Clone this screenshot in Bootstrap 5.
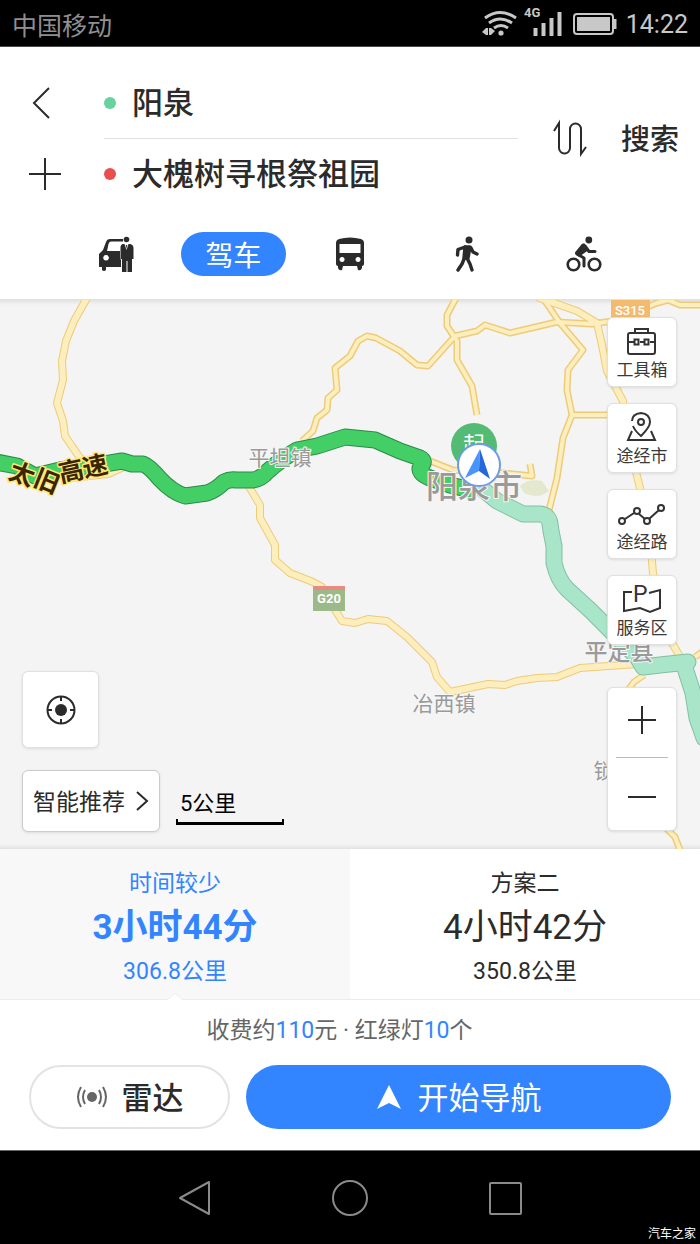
<!DOCTYPE html>
<html lang="zh-CN">
<head>
<meta charset="utf-8">
<meta name="viewport" content="width=device-width, initial-scale=1">
<title>路线规划</title>
<link href="https://cdn.jsdelivr.net/npm/bootstrap@5.3.0/dist/css/bootstrap.min.css" rel="stylesheet">
<style>
  :root { --ink: #2b2b2b; --brand: #3385ff; --hair: #e0e0e0; }
  body { font-family: Roboto, "Noto Sans CJK SC", sans-serif; color: var(--ink); background: #fff; }
  svg { display: block; flex: none; }
  button { font-family: inherit; color: inherit; }
  .icon-btn { background: none; border: 0; padding: 0; }
  .label-line { padding-top: 4px; }
  .statusbar { background: #000; height: 47px; border-bottom: 1px solid #4a4a4a; font-size: 25px; line-height: 46px; color: #c8c8c8; }
  .carrier { color: #8f8f8f; }
  .planner { padding-top: 20px; padding-bottom: 23px; }
  .side-col { width: 104px; padding-left: 28px; }
  .field-row { height: 71px; }
  .field-row + .field-row { border-top: 1px solid var(--hair); }
  .side-col .field-row { border-color: transparent; }
  .field-row input { border: 0; outline: 0; padding: 2px 0 0; background: none; font-size: 31px; font-weight: 500; line-height: 44px; color: var(--ink); }
  .dot { width: 12px; height: 12px; flex: none; }
  .dot-from { background: #65d39b; }
  .dot-to { background: #e94f4f; }
  .swap-col { width: 103px; }
  .search-btn { width: 79px; padding-top: 6px; font-size: 29px; font-weight: 500; text-align: left; }
  .modes { padding: 0 58px; margin-top: 23px; height: 44px; }
  .mode-pill { background: var(--brand); color: #fff; width: 105px; height: 44px; font-size: 28px; line-height: 44px; padding-top: 3px; }
  .map-area { min-height: 549px; background: #f4f4f4; box-shadow: inset 0 6px 5px -5px #0000001f, inset 0 -6px 5px -5px #0000001f; border-top: 1px solid #e2e2e2; }
  .map-canvas { inset: 0; width: 100%; height: 100%; }
  .tile { background: #fff; border: 1px solid #e0e0e0; border-radius: 6px; box-shadow: 0 1px 3px #0000001a; padding: 0; }
  .tools { top: 17px; right: 23px; width: 70px; }
  .tool { height: 70px; margin-bottom: 16px; font-size: 17px; line-height: 26px; color: #3a3a3a; padding-top: 5px; }
  .zoom-box { margin-top: 42px; height: 144px; }
  .zoom-box .zoom-in { height: 69px; }
  .zoom-box hr { margin: 0 8px; border-color: #bbb; opacity: 1; }
  .map-foot { left: 22px; bottom: 17px; }
  .locate { width: 77px; height: 77px; margin-bottom: 22px; }
  .prefer { width: 138px; height: 62px; font-size: 23px; border-color: #ccc; gap: 10px; }
  .scale-box { width: 108px; margin-left: 16px; margin-top: 15px; }
  .scale-box span { font-size: 22px; line-height: 30px; padding: 4px 0 0 4px; color: #000; }
  .scale-bar { height: 6px; border: 2px solid #000; border-top: 0; border-bottom-width: 3px; }
  .plan { height: 151px; background: #fff; font-size: 23px; line-height: 32px; padding: 8px 0 0; border: 0; border-bottom: 1px solid #ececec; }
  .plan .total { font-size: 35px; line-height: 56px; }
  .plan.chosen { background: #f8f8f8; color: var(--brand); }
  .plan.chosen .total { font-weight: 700; }
  .notch { left: 50%; bottom: -1px; margin-left: -8px; }
  .toll { font-size: 23px; line-height: 32px; padding: 15px 21px 0 0; color: #666; }
  .toll b { font-weight: 400; color: var(--brand); }
  .actions { padding: 18px 29px 21px; gap: 16px; }
  .actions button { height: 64px; font-size: 31px; border-radius: 32px; }
  .radar { width: 201px; border: 2px solid #e3e3e3; background: #fff; gap: 14px; font-weight: 500; }
  .go { background: var(--brand); color: #fff; border: 0; gap: 16px; }
  .sysbar { background: #000; height: 94px; border-top: 1px solid #666; }
  .sysbar .icon-btn { width: 155px; }
  .watermark { right: 4px; bottom: 0; font-size: 12px; line-height: 20px; color: #fff; }
</style>
</head>
<body>
<div class="d-flex flex-column min-vh-100">

  <div class="statusbar d-flex justify-content-between">
    <span class="carrier label-line ps-2 ms-1">中国移动</span>
    <div class="d-flex align-items-center pe-2 me-1">
      <svg class="me-1" width="142" height="46" viewBox="480 0 142 46" fill="none" stroke="#c8c8c8">
        <g stroke-width="3">
          <path d="M485 18Q500 7 516 18M489 23Q500 15 512 23M494 28Q501 23 508 28"/>
        </g>
        <circle cx="501" cy="33" r="2.6" fill="#c8c8c8" stroke="none"/>
        <path d="M482 32l4-4v7zM486 28h2v7h-2zM489 28h2v7h-2zM491 35v-7l4 3z" fill="#c8c8c8" stroke="none"/>
        <text x="524" y="17" font-size="13" font-weight="700" fill="#c8c8c8" stroke="none">4G</text>
        <path d="M535.500 28v8M543.500 23v13M551.500 18v18M559.500 12v24" stroke-width="4"/>
        <rect x="574" y="14" width="39" height="20" rx="3" stroke-width="2"/>
        <rect x="577" y="17" width="33" height="14" fill="#c8c8c8" stroke="none"/>
        <path d="M615 19v10" stroke-width="3"/>
      </svg>
      <span class="label-line">14:22</span>
    </div>
  </div>

  <form class="planner" onsubmit="return false">
    <div class="d-flex">
      <div class="side-col flex-shrink-0">
        <div class="field-row d-flex align-items-center">
          <button type="button" class="icon-btn" aria-label="返回">
            <svg width="32" height="34" viewBox="0 0 32 34" fill="none" stroke="#2b2b2b" stroke-width="2"><path d="M21 2 6 17 21 32"/></svg>
          </button>
        </div>
        <div class="field-row d-flex align-items-center">
          <button type="button" class="icon-btn" aria-label="添加途经点">
            <svg width="34" height="34" viewBox="0 0 34 34" stroke="#2b2b2b" stroke-width="2"><path d="M1 17H33M17 1V33"/></svg>
          </button>
        </div>
      </div>
      <div class="flex-grow-1">
        <div class="field-row d-flex align-items-center">
          <span class="dot dot-from rounded-circle me-3"></span>
          <input class="w-100" type="text" value="阳泉" aria-label="起点">
        </div>
        <div class="field-row d-flex align-items-center">
          <span class="dot dot-to rounded-circle me-3"></span>
          <input class="w-100" type="text" value="大槐树寻根祭祖园" aria-label="终点">
        </div>
      </div>
      <button type="button" class="icon-btn swap-col flex-shrink-0 d-flex align-items-center justify-content-center" aria-label="交换起终点">
        <svg width="36" height="38" viewBox="0 0 36 38" fill="none" stroke="#2b2b2b" stroke-width="2"><path d="M2 12 7 4V29a5.500 5.500 0 0 0 11 0V10a5.500 5.500 0 0 1 11 0V35L34 28"/></svg>
      </button>
      <button type="submit" class="icon-btn search-btn flex-shrink-0">搜索</button>
    </div>

    <div class="modes d-flex align-items-center">
      <div class="col d-flex justify-content-center">
        <button type="button" class="icon-btn" aria-label="打车">
          <svg width="36" height="36" viewBox="0 0 36 36" fill="#2b2b2b">
            <path fill-rule="evenodd" d="M1 18 5 14 8 6Q9 3 12 3H25V5.500H13Q11 5.500 10.500 8L9 15H22V22L23 24V31H8V34Q6 36 4 34V31H1ZM8 19a2.800 2.800 0 1 0 .1 0z"/>
            <circle cx="28.500" cy="3.500" r="2.800"/>
            <path fill-rule="evenodd" d="M24.500 8H32.500Q35.500 9 35.500 12V23H34V36H29.500V25H28.500V36H24V23H22.500V11Q22.500 9 24.500 8ZM26.500 8 28.500 14 30.500 8Z"/>
            <path d="M27.800 9H29.200L28.600 13Z"/>
          </svg>
        </button>
      </div>
      <div class="col d-flex justify-content-center">
        <button type="button" class="icon-btn mode-pill rounded-pill flex-shrink-0" aria-pressed="true">驾车</button>
      </div>
      <div class="col d-flex justify-content-center">
        <button type="button" class="icon-btn" aria-label="公交">
          <svg width="36" height="36" viewBox="0 0 36 36" fill="#2b2b2b">
            <path fill-rule="evenodd" d="M4 7Q4 4 7 3Q18 0 29 3Q32 4 32 7V28Q32 30 30 30V32Q29 35 26 34L25 30H11L10 34Q7 35 6 32V30Q4 30 4 28ZM7.500 8V17H28.500V8ZM10 21a2.500 2.500 0 1 0 .1 0ZM26 21a2.500 2.500 0 1 0 .1 0Z"/>
          </svg>
        </button>
      </div>
      <div class="col d-flex justify-content-center">
        <button type="button" class="icon-btn" aria-label="步行">
          <svg width="36" height="36" viewBox="0 0 36 36" fill="none" stroke="#2b2b2b" stroke-width="3.400" stroke-linecap="round" stroke-linejoin="round">
            <circle cx="20" cy="4" r="3.500" fill="#2b2b2b" stroke="none"/>
            <path d="M16 11 9 13.500 8.500 19M22 12 24 16 28 18M15 23 13 28 9 34M18 22 21 28 23 34"/>
            <path d="M16 11H21L19 22H15Z" fill="#2b2b2b"/>
          </svg>
        </button>
      </div>
      <div class="col d-flex justify-content-center">
        <button type="button" class="icon-btn" aria-label="骑行">
          <svg width="36" height="36" viewBox="0 0 36 36" fill="none" stroke="#2b2b2b" stroke-width="3" stroke-linecap="round" stroke-linejoin="round">
            <circle cx="22.800" cy="4" r="3.400" fill="#2b2b2b" stroke="none"/>
            <circle cx="7.500" cy="28.500" r="5.800" stroke-width="2.600"/>
            <circle cx="28.500" cy="28.500" r="5.800" stroke-width="2.600"/>
            <path d="M18 9 11 18 18 22V30M19 10 23 15.500H29"/>
            <path d="M17 9 10.500 17 13 19 20 14Z" fill="#2b2b2b"/>
          </svg>
        </button>
      </div>
    </div>
  </form>

  <main class="map-area position-relative flex-grow-1 overflow-hidden">
    <svg class="map-canvas position-absolute" viewBox="0 300 700 549" preserveAspectRatio="xMidYMid slice" fill="none" stroke-linejoin="round" role="img" aria-label="地图">
      <defs>
        <g id="roads">
          <path stroke-width="var(--w2)" d="M87 298 74 321 66 341 62 361 63 380 57 403 63 421 65 436 80 458M70 478 108 474 130 464"/>
          <path stroke-width="var(--w1)" d="M302 441 313 431 317 418 327 410 328 398 337 390 335 368 350 356 358 341 367 336 376 338 400 351 417 365 428 366 455 336 477 331 485 325 510 333 557 322 592 324 613 321 657 303 668 300 680 305 700 305"/>
          <path stroke-width="var(--w1)" d="M456 298 447 315 447 326 457 341 457 360 472 386 477 415M572 415H610M695 657 702 652M628 690 634 682 644 675M666 828 675 837 680 850"/>
          <path stroke-width="var(--w1)" d="M543 298 560 323 583 350 568 370 567 390 572 415 563 438 557 478 549 510M425 459 453 470 503 473 532 476 530 464"/>
          <path stroke-width="var(--w2)" d="M537 297 577 311 597 323 602 345 607 371 623 401 628 440 640 488 650 540 653 573 660 615 672 643 682 660"/>
          <path stroke-width="var(--w2)" d="M248 485 260 505 260 518 275 545 275 560 290 573 313 582 322 587 337 613 342 621 355 623 368 619 387 621 407 637 432 662 437 677 450 692 488 684 505 685 517 681 537 678 557 677 580 668 637 664"/>
        </g>
        <path id="ahead" stroke-linecap="round" d="M480 487 497 501 523 514H540Q549 515 550 524L551 531 554 546V563Q558 580 567 589L590 610 613 633 637 657 643 667 660 665 688 662M685 668 693 693 697 718 704 738"/>
        <path id="route" d="M-4 462 17 466 35 476 60 470 110 463 122 461 132 464H143Q149 466 160 479 172 492 185 496L207 493Q216 490 224 482 230 479 236 480H253Q261 479 268 471 280 460 297 450L317 446 345 437 375 440 400 451 420 458Q426 461 421 466 417 473 430 478L450 485 475 491"/>
      </defs>
      <path fill="#e3e8cf" d="M520 486Q528 478 542 481L549 491Q538 500 524 493Z"/>
      <use href="#roads" stroke="#eecb78" style="--w1:7px;--w2:8px"/>
      <use href="#roads" stroke="#fdeebd" style="--w1:4px;--w2:6px"/>
      <use href="#ahead" stroke="#83bfa4" stroke-width="17"/>
      <use href="#ahead" stroke="#a9e5c8" stroke-width="15"/>
      <use href="#route" stroke="#278b48" stroke-width="17"/>
      <use href="#route" stroke="#43cf66" stroke-width="15"/>

      <rect x="611" y="300" width="39" height="18" fill="#f3bb70"/>
      <rect x="313" y="586" width="32" height="25" fill="#9cb98a"/>
      <rect x="313" y="586" width="32" height="4" fill="#e98a80"/>
      <g fill="#fff" text-anchor="middle">
        <text x="630" y="315" font-size="13" font-weight="500">S315</text>
        <text x="329" y="603" font-size="13" font-weight="700">G20</text>
      </g>

      <circle cx="474" cy="446" r="23" fill="#54bb75"/>
      <text x="474" y="452" font-size="22" text-anchor="middle" fill="#fff">起</text>
      <g fill="#9a9a9a" stroke="#f7f7f7" stroke-width="2" paint-order="stroke" text-anchor="middle">
        <text x="280" y="465" font-size="21">平坦镇</text>
        <text x="444" y="711" font-size="21">冶西镇</text>
        <text x="619" y="660" font-size="23" font-weight="500">平定县</text>
        <text x="604" y="778" font-size="21">锁</text>
        <text x="474" y="498" font-size="32" font-weight="500">阳泉市</text>
      </g>
      <g font-size="25" font-weight="700" fill="#3a2500" stroke="#ffe873" stroke-width="3" paint-order="stroke" text-anchor="middle">
        <text transform="translate(22 474) rotate(20)" y="9">太</text>
        <text transform="translate(47 481) rotate(22)" y="9">旧</text>
        <text transform="translate(71 471) rotate(-12)" y="9">高</text>
        <text transform="translate(95 466) rotate(-12)" y="9">速</text>
      </g>
      <circle cx="479" cy="465" r="21" fill="#fff" stroke="#6c9ce6" stroke-width="2"/>
      <path d="M480 449 465 478 479 471Z" fill="#4a94ff"/>
      <path d="M480 449 490 479 479 471Z" fill="#2468dc"/>
    </svg>

    <div class="tools position-absolute">
      <button type="button" class="tile tool w-100 d-flex flex-column align-items-center">
        <svg width="40" height="34" viewBox="0 0 40 34" fill="none" stroke="#333" stroke-width="2"><rect x="6" y="10" width="27" height="21" rx="2"/><path d="M13 10V6H26V10M6 19H12M18 19H22M28 19H33"/><rect x="12.500" y="16.500" width="4" height="5"/><rect x="22.500" y="16.500" width="4" height="5"/></svg>
        工具箱
      </button>
      <button type="button" class="tile tool w-100 d-flex flex-column align-items-center">
        <svg width="40" height="34" viewBox="0 0 40 34" fill="none" stroke="#333" stroke-width="2"><path d="M10 12Q10 5 19 4Q28 5 28 13Q28 18 19 27Q13 22 11 17"/><circle cx="19" cy="13" r="3"/><path d="M10 22 6 31H33L29 22"/></svg>
        途经市
      </button>
      <button type="button" class="tile tool w-100 d-flex flex-column align-items-center">
        <svg width="48" height="34" viewBox="-3 0 48 34" fill="none" stroke="#333" stroke-width="2"><circle cx="1" cy="26" r="3"/><circle cx="16" cy="16" r="3"/><circle cx="26" cy="26" r="3"/><circle cx="40" cy="13" r="3"/><path d="M4 24 13 18M18 19 24 24M28 24 38 15"/></svg>
        途经路
      </button>
      <button type="button" class="tile tool w-100 d-flex flex-column align-items-center">
        <svg width="40" height="34" viewBox="0 0 40 34" fill="none" stroke="#333" stroke-width="2"><path d="M10 11H2V30L18 27 28 31 38 27V9L27 12"/><text x="11" y="21" font-size="23" fill="#333" stroke="none">P</text></svg>
        服务区
      </button>
      <div class="tile zoom-box d-flex flex-column">
        <button type="button" class="icon-btn zoom-in d-flex align-items-center justify-content-center" aria-label="放大"><svg width="28" height="34" viewBox="0 0 28 34" stroke="#2b2b2b" stroke-width="2"><path d="M0 14H28M14 0V28"/></svg></button>
        <hr>
        <button type="button" class="icon-btn flex-fill d-flex align-items-center justify-content-center" aria-label="缩小"><svg width="28" height="28" viewBox="0 0 28 28" stroke="#2b2b2b" stroke-width="2"><path d="M0 17H28"/></svg></button>
      </div>
    </div>

    <div class="map-foot position-absolute">
      <button type="button" class="tile locate d-flex align-items-center justify-content-center" aria-label="定位">
        <svg width="30" height="30" viewBox="0 0 30 30" fill="none" stroke="#2b2b2b" stroke-width="2"><circle cx="15" cy="15" r="13.500"/><circle cx="15" cy="15" r="6" fill="#2b2b2b" stroke="none"/><path d="M15 1V6M15 24V29M1 15H6M24 15H29"/></svg>
      </button>
      <div class="d-flex">
        <button type="button" class="tile prefer d-flex align-items-center justify-content-center"><span class="label-line">智能推荐</span>
          <svg width="14" height="22" viewBox="0 0 14 22" fill="none" stroke="#2b2b2b" stroke-width="2"><path d="M2 2 12 11 2 20"/></svg>
        </button>
        <div class="scale-box">
          <span class="d-block">5公里</span>
          <div class="scale-bar"></div>
        </div>
      </div>
    </div>
  </main>

  <section>
    <div class="d-flex">
      <button type="button" class="plan chosen w-50 position-relative" aria-pressed="true">
        <span class="d-block">时间较少</span>
        <span class="total d-block">3小时44分</span>
        <span class="d-block">306.8公里</span>
        <svg class="notch position-absolute" width="16" height="8" viewBox="0 0 16 8"><path d="M0 8 8 0 16 8Z" fill="#fff"/><path d="M0 8 8 1 16 8" fill="none" stroke="#ececec"/></svg>
      </button>
      <button type="button" class="plan w-50" aria-pressed="false">
        <span class="d-block">方案二</span>
        <span class="total d-block">4小时42分</span>
        <span class="d-block">350.8公里</span>
      </button>
    </div>
    <div class="toll text-center">收费约<b>110</b>元 · 红绿灯<b>10</b>个</div>
    <div class="actions d-flex">
      <button type="button" class="radar d-flex align-items-center justify-content-center">
        <svg width="32" height="24" viewBox="0 0 32 24" fill="none" stroke="#666" stroke-width="2"><circle cx="16" cy="12" r="5" fill="#666" stroke="none"/><path d="M9 5Q5 12 9 19M23 5Q27 12 23 19M5 2Q-1 12 5 22M27 2Q33 12 27 22"/></svg>
        <span class="label-line">雷达</span>
      </button>
      <button type="button" class="go flex-grow-1 d-flex align-items-center justify-content-center">
        <svg width="26" height="24" viewBox="0 0 26 24" fill="#fff"><path d="M13 0 25 24 13 18 1 24Z"/></svg>
        <span class="label-line">开始导航</span>
      </button>
    </div>
  </section>

  <nav class="sysbar d-flex justify-content-center position-relative" aria-label="系统导航">
    <button type="button" class="icon-btn d-flex align-items-center justify-content-center" aria-label="返回"><svg width="36" height="36" viewBox="0 0 36 36" fill="none" stroke="#8a8a8a" stroke-width="2" stroke-linejoin="round"><path d="M32 2V34L3 18Z"/></svg></button>
    <button type="button" class="icon-btn d-flex align-items-center justify-content-center" aria-label="主页"><svg width="36" height="36" viewBox="0 0 36 36" fill="none" stroke="#8a8a8a" stroke-width="2"><circle cx="18" cy="18" r="17"/></svg></button>
    <button type="button" class="icon-btn d-flex align-items-center justify-content-center" aria-label="最近任务"><svg width="36" height="36" viewBox="0 0 36 36" fill="none" stroke="#8a8a8a" stroke-width="2"><rect x="3" y="3" width="31" height="31" rx="1"/></svg></button>
    <span class="watermark position-absolute">汽车之家</span>
  </nav>
</div>
<script src="https://cdn.jsdelivr.net/npm/bootstrap@5.3.0/dist/js/bootstrap.bundle.min.js"></script>
</body>
</html>
